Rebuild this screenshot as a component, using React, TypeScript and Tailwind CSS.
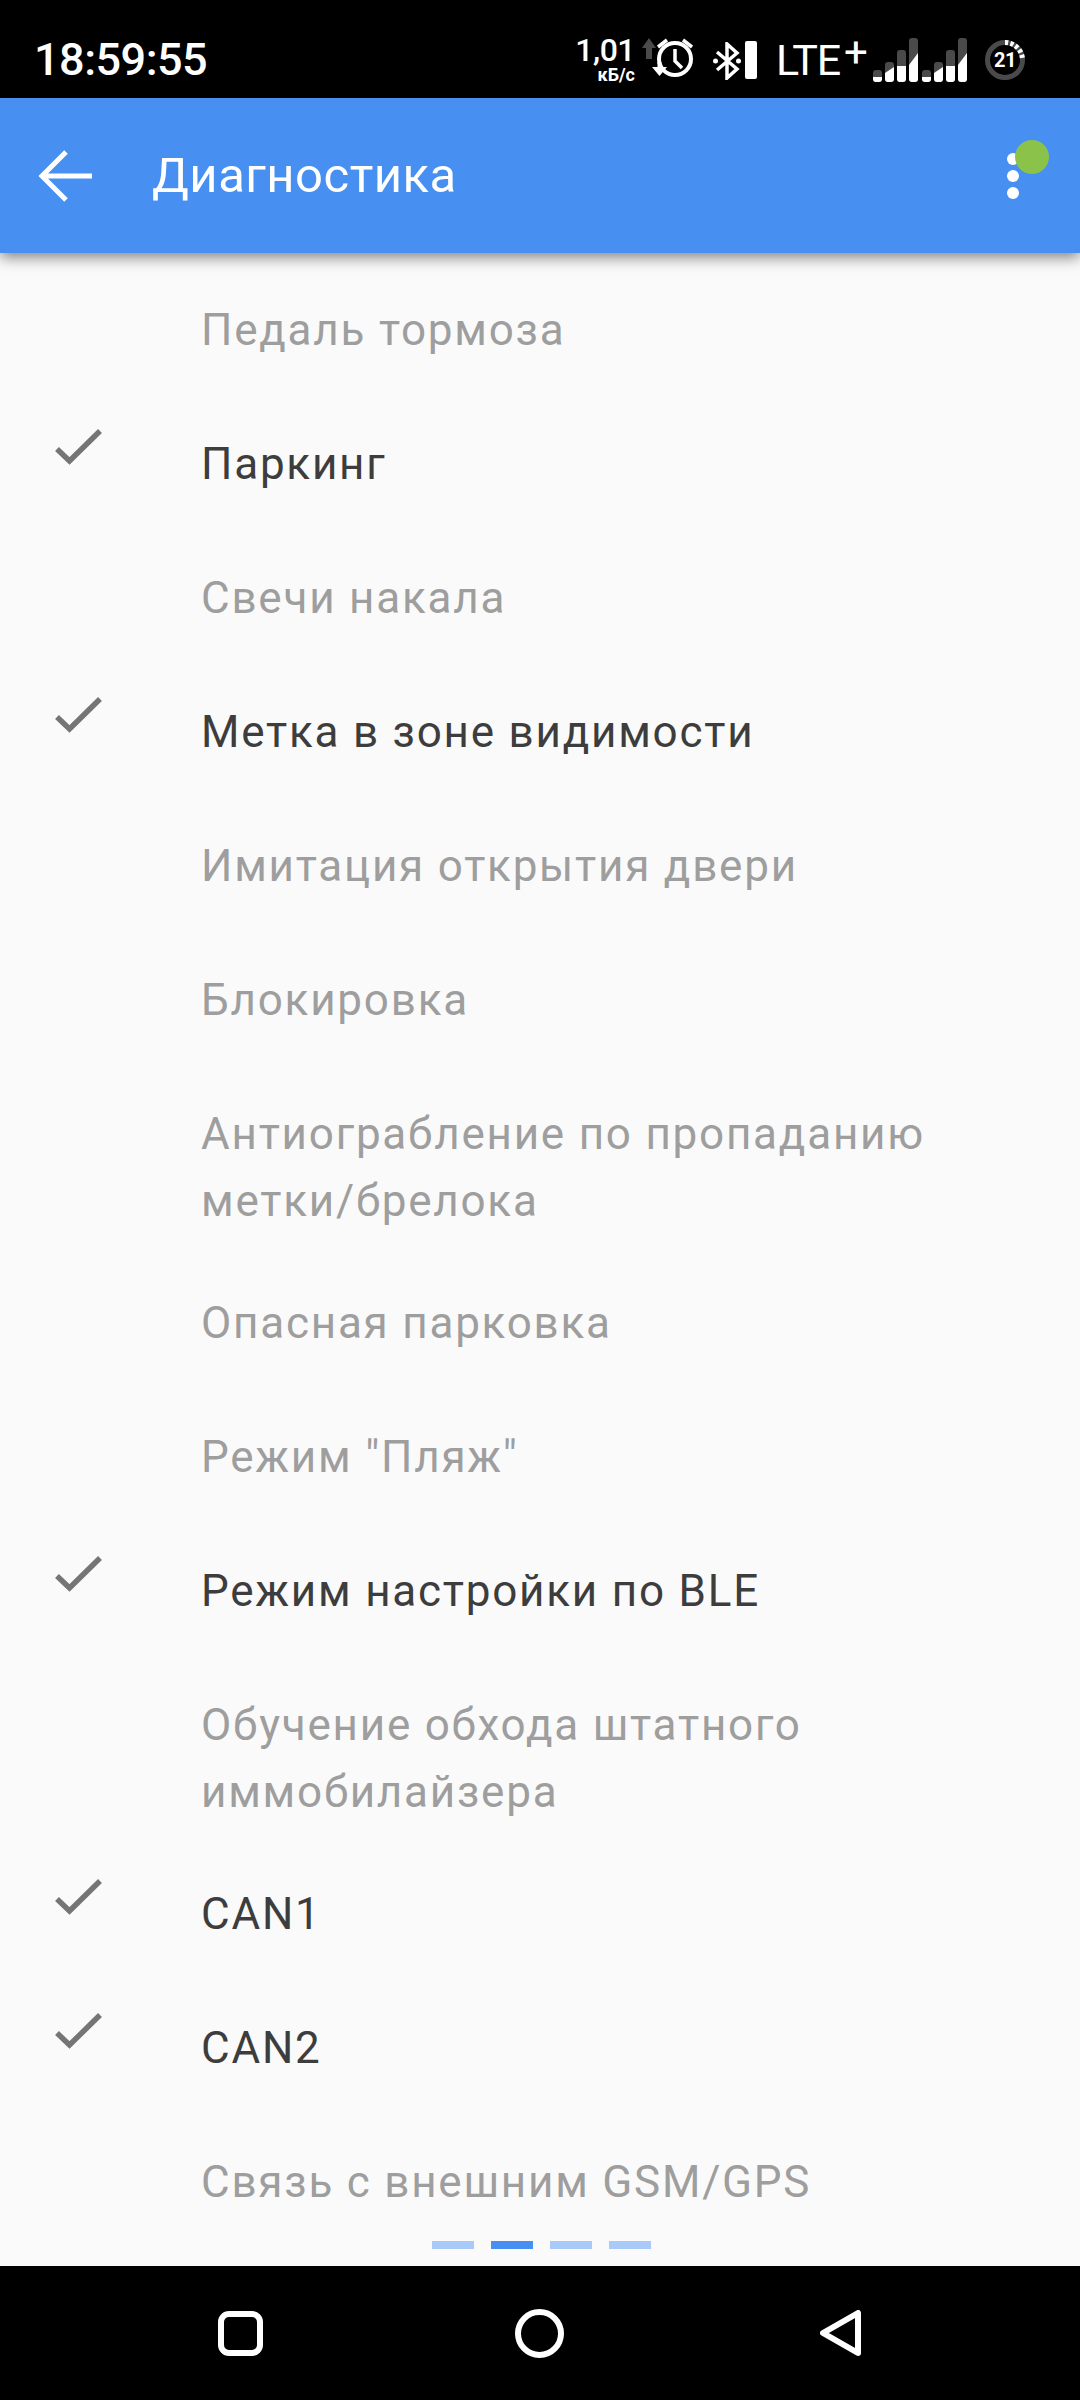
const rows: { label: string[]; active?: boolean }[] = [
  { label: ["Педаль тормоза"] },
  { label: ["Паркинг"], active: true },
  { label: ["Свечи накала"] },
  { label: ["Метка в зоне видимости"], active: true },
  { label: ["Имитация открытия двери"] },
  { label: ["Блокировка"] },
  { label: ["Антиограбление по пропаданию", "метки/брелока"] },
  { label: ["Опасная парковка"] },
  { label: ['Режим "Пляж"'] },
  { label: ["Режим настройки по BLE"], active: true },
  { label: ["Обучение обхода штатного", "иммобилайзера"] },
  { label: ["CAN1"], active: true },
  { label: ["CAN2"], active: true },
  { label: ["Связь с внешним GSM/GPS"] },
];

function SignalIcon() {
  return (
    <svg width="45" height="44" viewBox="0 0 45 44" className="shrink-0">
      <rect x="0" y="32" width="9" height="12" rx="3" fill="#4a4a4a" />
      <rect x="12" y="24" width="9" height="20" rx="3" fill="#4a4a4a" />
      <rect x="24" y="12" width="9" height="32" rx="3" fill="#4a4a4a" />
      <rect x="36" y="0" width="9" height="44" rx="3" fill="#4a4a4a" />
      <path d="M0 39h9v2a3 3 0 0 1-3 3H3a3 3 0 0 1-3-3z" fill="#fff" />
      <path d="M12 35L21 29v12a3 3 0 0 1-3 3h-3a3 3 0 0 1-3-3z" fill="#fff" />
      <path d="M24 28h9v13a3 3 0 0 1-3 3h-3a3 3 0 0 1-3-3z" fill="#fff" />
      <path d="M36 27L45 15v26a3 3 0 0 1-3 3h-3a3 3 0 0 1-3-3z" fill="#fff" />
    </svg>
  );
}

function StatusBar() {
  return (
    <div className="flex h-[98px] items-center justify-between bg-black pl-[34px] pr-[54px] text-white">
      <span className="mt-[20px] text-[45px] font-medium leading-none tracking-[-0.5px]">18:59:55</span>
      <div className="mt-[22px] flex items-center">
        <div className="flex w-[58px] flex-col items-end">
          <span className="text-[32px] font-medium leading-[26px] tracking-[-0.5px]">1,01</span>
          <span className="mt-[3px] text-[18px] font-bold leading-[18px]">кБ/с</span>
        </div>
        <svg width="52" height="44" viewBox="0 0 52 44" className="ml-[6px] shrink-0">
          <path d="M8 0L15 10H11V21H5V10H1z" fill="#4a4a4a" />
          <circle cx="34" cy="21" r="16" fill="none" stroke="#fff" strokeWidth="4" />
          <path d="M34 11v12l7 7" fill="none" stroke="#fff" strokeWidth="3.500" />
          <path d="M17 9l9-7M51 9l-9-7" fill="none" stroke="#fff" strokeWidth="3.500" />
          <path d="M11 29h15l-7.500 9z" fill="#fff" />
          <path d="M18.500 24v6" stroke="#fff" strokeWidth="4" />
        </svg>
        <svg width="28" height="38" viewBox="0 0 28 38" className="ml-[20px] mt-[2px] shrink-0">
          <path d="M4 10L24 27L14 36V2L24 11L4 28" fill="none" stroke="#fff" strokeWidth="3.500" />
          <circle cx="2.500" cy="19" r="2.500" fill="#fff" />
          <circle cx="25.500" cy="19" r="2.500" fill="#fff" />
        </svg>
        <div className="ml-[4px] h-[38px] w-[12px] rounded-[2px] bg-white" />
        <div className="ml-[19px] flex w-[92px] items-start">
          <span className="w-[68px] text-[43px] leading-none tracking-[-1.2px]">LTE</span>
          <span className="-mt-[7px] text-[42px] leading-none">+</span>
        </div>
        <div className="ml-[5px] flex items-center gap-[4px]">
          <SignalIcon />
          <SignalIcon />
        </div>
        <div className="relative ml-[17px] flex h-[42px] w-[42px] items-center justify-center">
          <svg width="42" height="42" viewBox="0 0 42 42" className="absolute inset-0">
            <circle cx="21" cy="21" r="17.500" fill="none" stroke="#4a4a4a" strokeWidth="5" />
            <circle
              cx="21"
              cy="21"
              r="17.500"
              fill="none"
              stroke="#fff"
              strokeWidth="5"
              pathLength="100"
              strokeDasharray="3 2 3 2 3 2 3 2 3 100"
              transform="rotate(-90 21 21)"
            />
          </svg>
          <span className="text-[20px] font-bold leading-none tracking-[-0.5px]">21</span>
        </div>
      </div>
    </div>
  );
}

function AppBar() {
  return (
    <div className="relative z-10 flex h-[155px] items-center bg-[#4790f2] pl-[38px] shadow-[0_4px_14px_rgba(0,0,0,0.5)]">
      <svg width="54" height="52" viewBox="0 0 54 52" className="shrink-0">
        <path d="M28 2L4 26l24 24M4 26h50" fill="none" stroke="#fff" strokeWidth="5" />
      </svg>
      <h1 className="ml-[60px] text-[49px] font-normal leading-none tracking-[0.5px] text-white">Диагностика</h1>
      <div className="relative ml-auto mr-[61px] flex flex-col gap-[5px]">
        <span className="h-[12px] w-[12px] rounded-full bg-white" />
        <span className="h-[12px] w-[12px] rounded-full bg-white" />
        <span className="h-[12px] w-[12px] rounded-full bg-white" />
        <span className="absolute -top-[13px] left-[8px] h-[34px] w-[34px] rounded-full bg-[#8bc34a]" />
      </div>
    </div>
  );
}

function CheckRow({ label, active }: { label: string[]; active?: boolean }) {
  return (
    <div className={`flex pl-[52px] pt-[33px] ${label.length > 1 ? "pb-[22px]" : "pb-[34px]"}`}>
      <div className="h-[67px] w-[149px] shrink-0">
        {active ? (
          <svg width="52" height="40" viewBox="0 0 52 40" className="-mt-[6px]">
            <path d="M5 24l12.500 12L48 6" fill="none" stroke="#757575" strokeWidth="5.500" />
          </svg>
        ) : null}
      </div>
      <div
        className={`text-[44px] leading-[67px] tracking-[1.78px] ${active ? "text-[#3d3d3d]" : "text-[#9e9e9e]"}`}
      >
        {label.map((line) => (
          <div key={line}>{line}</div>
        ))}
      </div>
    </div>
  );
}

function NavBar() {
  return (
    <div className="flex h-[134px] items-center bg-black">
      <div className="ml-[218px] h-[45px] w-[45px] rounded-[11px] border-[6px] border-white" />
      <div className="ml-[252px] h-[49px] w-[49px] rounded-full border-[6px] border-white" />
      <svg width="42" height="46" viewBox="0 0 42 46" className="ml-[256px]">
        <path d="M38 3v40L3 23z" fill="none" stroke="#fff" strokeWidth="6" strokeLinejoin="round" />
      </svg>
    </div>
  );
}

export default function App() {
  return (
    <div className="flex h-[2400px] w-[1080px] flex-col bg-[#fafafa] font-['Roboto',sans-serif]">
      <StatusBar />
      <AppBar />
      <div className="relative flex-1 overflow-hidden pt-[11px]">
        {rows.map((row) => (
          <CheckRow key={row.label[0]} label={row.label} active={row.active} />
        ))}
        <div className="absolute bottom-[17px] left-[432px] flex gap-[17px]">
          <span className="h-[8px] w-[42px] bg-[#a9caf8]" />
          <span className="h-[8px] w-[42px] bg-[#4790f2]" />
          <span className="h-[8px] w-[42px] bg-[#a9caf8]" />
          <span className="h-[8px] w-[42px] bg-[#a9caf8]" />
        </div>
      </div>
      <NavBar />
    </div>
  );
}
